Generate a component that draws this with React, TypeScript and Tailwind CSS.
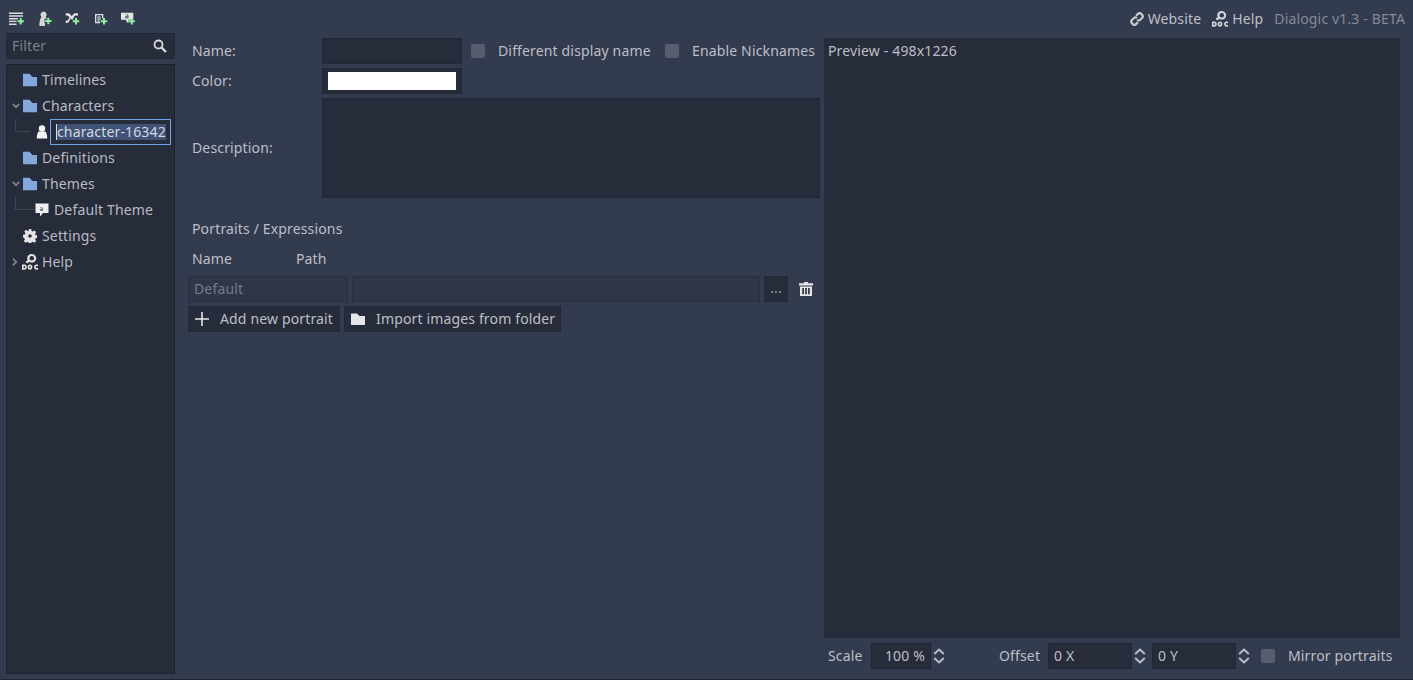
import React from "react";

const GreenPlus = ({ cx, cy }: { cx: number; cy: number }) => (
  <path
    d={`M${cx - 1} ${cy - 3.2}h2v2.200h2.200v2H${cx + 1}v2.200h-2V${cy + 1}h-2.200v-2H${cx - 1}z`}
    fill="#8ff0a0"
  />
);

const Bar = ({ children }: { children: React.ReactNode }) => (
  <svg width="16" height="16" viewBox="0 0 16 16" className="shrink-0">
    {children}
  </svg>
);

const TimelineAdd = () => (
  <Bar>
    <path d="M1 2.500h14V4H1zM1 5.200h14v1.500H1zM1 8h9v1.400H1zM1 10.700h7.500v1.400H1zM1 13.500h7.500V15H1z" fill="#dcdcdc" />
    <GreenPlus cx={12.7} cy={11.3} />
  </Bar>
);
const CharacterAdd = () => (
  <Bar>
    <path d="M7.300 1.400a3.300 3.300 0 0 1 2.300 5.700c.7.400 1.100 1 1.400 1.600H8.500V13H9v3H3.400c0-3.500.3-7 2.100-8.900a3.300 3.300 0 0 1 1.800-5.700z" fill="#d6d6d6" />
    <GreenPlus cx={12.3} cy={11} />
  </Bar>
);
const DefinitionAdd = () => (
  <Bar>
    <path d="M1.700 3.300H4c1.700 0 2.700 1.500 3.800 3.300.9-1.700 2-3.300 3.800-3.300h2.400v2.200h-2.300c-1 0-1.900 1.500-2.700 3l.6 1H7.500l-.8-1.300c-1.100 2-2 4.800-3.700 4.800H1.700v-2.200h1c.9 0 1.900-1.900 2.900-3.600C4.700 6.800 4 5.500 3 5.500H1.700z" fill="#e4e4e4" />
    <GreenPlus cx={12} cy={11.3} />
  </Bar>
);
const ThemeAdd = () => (
  <Bar>
    <path fillRule="evenodd" d="M3 4h8.300v4.500H10V5.300H4.300v6.700H8v1.300H3z" fill="#dedede" />
    <path d="M5.300 6.500h3.400v1.200H5.300zM5.300 8.600h3.400v1.200H5.300zM5.300 10.600h2.400v1.200H5.300z" fill="#dedede" />
    <GreenPlus cx={12} cy={11.3} />
  </Bar>
);
const BubbleAdd = () => (
  <Bar>
    <path d="M1 2.700h12.300v7H8.500v3H7.500l-2-3H1z" fill="#e6e6e6" />
    <path d="M5.800 8.500c-1.200 0-1.500-2.500.4-2.500h1.100c0-.9-.9-.9-1.600-.5l-.3-.9c1.400-.6 3.200-.3 3.200 1.400v2.500z" fill="#6f7482" />
    <GreenPlus cx={11.7} cy={11.3} />
  </Bar>
);

const Folder = () => (
  <svg width="14" height="14" viewBox="0 0 14 14" className="shrink-0">
    <path d="M0 .8h6.500L9.500 4H14v9.200H0z" fill="#82a7da" />
  </svg>
);

const Gear = () => (
  <svg width="14" height="14" viewBox="0 0 14 14" className="shrink-0">
    <path
      fillRule="evenodd"
      d="M5.800 0h2.400l.4 2 1.200.5 1.700-1.100 1.700 1.700-1.100 1.700.5 1.200 1.900.4v2.400l-1.900.4-.5 1.200 1.100 1.700-1.700 1.700-1.700-1.100-1.200.5-.4 1.900H5.800l-.4-1.900-1.200-.5-1.700 1.100-1.700-1.700 1.100-1.700-.5-1.200L0 8.200V5.800l1.900-.4.5-1.200L1.300 2.500 3 .8l1.700 1.100 1.200-.5zM7 5.200a1.800 1.800 0 1 0 0 3.600 1.800 1.800 0 0 0 0-3.600z"
      fill="#e4e4e4"
    />
  </svg>
);

const DocHelp = ({ color = "#e4e4e4" }: { color?: string }) => (
  <svg width="16" height="16" viewBox="0 0 16 16" className="shrink-0">
    <path
      fillRule="evenodd"
      d="M9.800 0a4.300 4.300 0 1 1-2.600 7.700L5.300 9.600 3.600 8l2-2A4.300 4.300 0 0 1 9.800 0zm0 2a2.300 2.300 0 1 0 0 4.600 2.300 2.300 0 0 0 0-4.600z"
      fill={color}
    />
    <path
      fillRule="evenodd"
      d="M0 10.500h2.500C3.900 10.500 4.800 11.400 4.800 13s-.9 2.700-2.300 2.700H0zm1.700 1.500v2.200h.6c.6 0 .8-.5.8-1.100S2.900 12 2.300 12zM8 10.500c1.500 0 2.400 1.100 2.400 2.600S9.500 15.800 8 15.800s-2.400-1.100-2.400-2.700.9-2.600 2.400-2.600zm0 1.500c-.5 0-.7.500-.7 1.100s.2 1.200.7 1.200.7-.6.7-1.200-.2-1.100-.7-1.100zM16 10.800v1.600c-1.200-.5-2.200-.4-2.200.7s1 1.200 2.200.7v1.600c-2.200.8-3.900-.2-3.900-2.300s1.700-3.100 3.900-2.300z"
      fill={color}
    />
  </svg>
);

const LinkIcon = () => (
  <svg width="14" height="14" viewBox="0 0 14 14" className="shrink-0" fill="none" stroke="#c8c9cf" strokeWidth="2.200">
    <path d="M6 3.800 8 1.900a2.300 2.300 0 0 1 3.200 0l.9.900a2.300 2.300 0 0 1 0 3.200L10.300 7.800a2.300 2.300 0 0 1-3.200 0" />
    <path d="M8 10.200 6 12.100a2.300 2.300 0 0 1-3.200 0l-.9-.9a2.300 2.300 0 0 1 0-3.200L3.700 6.200a2.300 2.300 0 0 1 3.200 0" />
  </svg>
);

const Chevron = ({ open }: { open: boolean }) =>
  open ? (
    <svg width="8" height="6" viewBox="0 0 8 6" className="shrink-0" fill="none" stroke="#7c808d" strokeWidth="1.800">
      <path d="M.7.900 4 4.200 7.300.9" />
    </svg>
  ) : (
    <svg width="6" height="8" viewBox="0 0 6 8" className="shrink-0" fill="none" stroke="#7c808d" strokeWidth="1.800">
      <path d="M.9.700 4.200 4 .9 7.300" />
    </svg>
  );

const Spinner = () => (
  <svg width="12" height="16" viewBox="0 0 12 16" className="shrink-0" fill="none" stroke="#bdbfc6" strokeWidth="2">
    <path d="M1.200 6 6 1.600 10.800 6" />
    <path d="M1.200 10 6 14.400 10.800 10" />
  </svg>
);

const Check = () => <div className="w-[14px] h-[14px] rounded-[2px] bg-[#575d6e] shrink-0" />;

const Field = ({ className = "", children }: { className?: string; children?: React.ReactNode }) => (
  <div className={`bg-[#272c3b] border border-[#212534] shrink-0 flex items-center ${className}`}>{children}</div>
);

const Row = ({ chevron, icon, label }: { chevron?: "open" | "closed"; icon: React.ReactNode; label: string }) => (
  <div className="h-[26px] flex items-center text-[#b9bbc2]">
    <div className="w-[16px] shrink-0 flex pl-[5px]">{chevron && <Chevron open={chevron === "open"} />}</div>
    <div className="w-[14px] flex justify-center">{icon}</div>
    <span className="ml-[5px]">{label}</span>
  </div>
);

export default function App() {
  return (
    <div
      className="w-[1413px] h-[680px] overflow-hidden bg-[#333b4f] text-[14px] leading-[20px] tracking-[0.15px] flex border-b border-[#212534] text-[#bdbfc6]"
      style={{ fontFamily: '"Noto Sans", sans-serif' }}
    >
      {/* left column */}
      <div className="w-[175px] ml-[6px] shrink-0 flex flex-col">
        <div className="h-[33px] shrink-0 flex items-center gap-[12px] pl-[2px] pt-[3px]">
          <TimelineAdd />
          <CharacterAdd />
          <DefinitionAdd />
          <ThemeAdd />
          <BubbleAdd />
        </div>
        <div className="h-[26px] w-[169px] bg-[#272c3b] border border-[#232836] flex items-center pl-[5px] pr-[7px] justify-between shrink-0">
          <span className="text-[#7c808c]">Filter</span>
          <svg width="14" height="14" viewBox="0 0 14 14" fill="none" stroke="#d8d9dd" strokeWidth="1.800">
            <circle cx="5.500" cy="5.500" r="4" />
            <path d="m8.500 8.500 4.500 4.500" strokeWidth="2.400" />
          </svg>
        </div>
        <div className="mt-[5px] h-[610px] w-[169px] bg-[#272c3b] border border-[#1d2130] pt-[2px] shrink-0">
          <Row icon={<Folder />} label="Timelines" />
          <Row chevron="open" icon={<Folder />} label="Characters" />
          <div className="h-[26px] flex items-center">
            <div className="w-[15px] h-[13px] ml-[8px] mb-[13px] border-l border-b border-[#3f4557] shrink-0" />
            <svg width="12" height="14" viewBox="0 0 12 14" className="ml-[6px] shrink-0">
              <circle cx="6" cy="3.500" r="3.200" fill="#f4f4f4" />
              <path d="M2.500 6.500h7c1.300 1.500 1.700 4.500 1.700 7H.8c0-2.500.4-5.500 1.700-7z" fill="#f4f4f4" />
            </svg>
            <div className="ml-[2px] w-[121px] h-[26px] bg-[#272c3b] border border-[#6ea4e8] flex items-start pt-[4px] pl-[5px] shrink-0">
              <span className="bg-[#3e5377] text-[#d6d8de] h-[16px] w-[110px] leading-[15px] border-l border-[#e0e0e0] whitespace-nowrap">character-16342</span>
            </div>
          </div>
          <Row icon={<Folder />} label="Definitions" />
          <Row chevron="open" icon={<Folder />} label="Themes" />
          <div className="h-[26px] flex items-center text-[#b9bbc2]">
            <div className="w-[19px] h-[13px] ml-[8px] mb-[13px] border-l border-b border-[#3f4557] shrink-0" />
            <svg width="14" height="14" viewBox="0 0 14 14" className="shrink-0 ml-[1px]">
              <path d="M0.500 .5h13v9.500H8l-3 3.500V10H.5z" fill="#f0f0f0" />
              <path d="M5.500 8c-1 0-1.200-2.200.5-2.200H7c0-.8-.8-.9-1.500-.5l-.3-.8c1.300-.5 2.900-.2 2.900 1.300V8z" fill="#7a7f8c" />
            </svg>
            <span className="ml-[5px]">Default Theme</span>
          </div>
          <Row icon={<Gear />} label="Settings" />
          <Row chevron="closed" icon={<DocHelp />} label="Help" />
        </div>
      </div>

      {/* right column */}
      <div className="flex-1 flex flex-col min-w-0">
        <div className="h-[38px] shrink-0 flex items-center justify-end pr-[8px] whitespace-nowrap">
          <div className="flex items-center text-[#bdbfc6]">
            <LinkIcon />
            <span className="ml-[4px]">Website</span>
          </div>
          <div className="flex items-center ml-[11px]">
            <DocHelp color="#d5d6da" />
            <span className="ml-[4px]">Help</span>
          </div>
          <span className="ml-[11px] text-[#858a97]">Dialogic v1.3 - BETA</span>
        </div>

        <div className="flex-1 flex min-h-0 pl-[7px]">
          <div className="w-[636px] shrink-0 flex flex-col">
            <div className="flex items-center h-[26px]">
              <span className="w-[134px] pl-[4px]">Name:</span>
              <Field className="w-[140px] h-[26px]" />
              <div className="ml-[9px]"><Check /></div>
              <span className="ml-[13px] w-[154px] whitespace-nowrap">Different display name</span>
              <div className="ml-[13px]"><Check /></div>
              <span className="ml-[13px] whitespace-nowrap">Enable Nicknames</span>
            </div>
            <div className="flex items-center h-[26px] mt-[4px]">
              <span className="w-[134px] pl-[4px]">Color:</span>
              <Field className="w-[140px] h-[26px] justify-center">
                <div className="w-[128px] h-[18px] bg-white" />
              </Field>
            </div>
            <div className="flex items-center h-[100px] mt-[4px]">
              <span className="w-[134px] pl-[4px]">Description:</span>
              <Field className="w-[498px] h-[100px]" />
            </div>

            <div className="mt-[21px] pl-[4px] h-[20px]">Portraits / Expressions</div>
            <div className="mt-[10px] pl-[4px] h-[20px] flex">
              <span className="w-[104px]">Name</span>
              <span>Path</span>
            </div>
            <div className="mt-[7px] flex items-center h-[26px]">
              <div className="w-[160px] h-[26px] bg-[#2f3647] border border-[#292f3e] flex items-center pl-[5px] text-[#767b88] shrink-0">Default</div>
              <div className="ml-[4px] w-[408px] h-[26px] bg-[#2f3647] border border-[#292f3e] shrink-0" />
              <div className="ml-[4px] w-[24px] h-[26px] bg-[#272c3b] border border-[#232836] flex items-center justify-center text-[#9a9da7] pb-[3px] shrink-0">...</div>
              <svg width="14" height="16" viewBox="0 0 14 16" className="ml-[11px] shrink-0">
                <path d="M5 1h4v1.200h5v2.200H0V2.200h5z" fill="#e6e6e6" />
                <path fillRule="evenodd" d="M1 5.500h12V15H1zM3.200 7v6.300h1.800V7zM6.100 7v6.300h1.800V7zM9 7v6.300h1.800V7z" fill="#e6e6e6" />
              </svg>
            </div>
            <div className="mt-[4px] flex items-center">
              <div className="h-[26px] w-[152px] bg-[#272c3b] border border-[#232836] flex items-center pl-[6px] shrink-0">
                <svg width="14" height="14" viewBox="0 0 14 14"><path d="M6.200 0h1.600v6.200H14v1.600H7.800V14H6.200V7.800H0V6.200h6.200z" fill="#e6e6e6" /></svg>
                <span className="ml-[11px] whitespace-nowrap">Add new portrait</span>
              </div>
              <div className="ml-[4px] h-[26px] w-[217px] bg-[#272c3b] border border-[#232836] flex items-center pl-[6px] shrink-0">
                <svg width="14" height="14" viewBox="0 0 14 14"><path d="M0 1.500h6L8.500 4H14v9H0z" fill="#e6e6e6" /></svg>
                <span className="ml-[11px] whitespace-nowrap">Import images from folder</span>
              </div>
            </div>
          </div>

          <div className="w-[576px] shrink-0 flex flex-col">
            <div className="h-[600px] bg-[#272c3b] pl-[4px] pt-[3px] shrink-0">Preview - 498x1226</div>
            <div className="h-[26px] mt-[5px] flex items-center whitespace-nowrap">
              <span className="ml-[4px] w-[43px]">Scale</span>
              <Field className="w-[60px] h-[26px] justify-end pr-[5px]">100 %</Field>
              <div className="ml-[2px]"><Spinner /></div>
              <span className="ml-[54px] w-[49px]">Offset</span>
              <Field className="w-[84px] h-[26px] pl-[5px]">0 X</Field>
              <div className="ml-[2px]"><Spinner /></div>
              <Field className="ml-[6px] w-[84px] h-[26px] pl-[5px]">0 Y</Field>
              <div className="ml-[2px]"><Spinner /></div>
              <div className="ml-[11px]"><Check /></div>
              <span className="ml-[13px]">Mirror portraits</span>
            </div>
          </div>
        </div>
      </div>
    </div>
  );
}
